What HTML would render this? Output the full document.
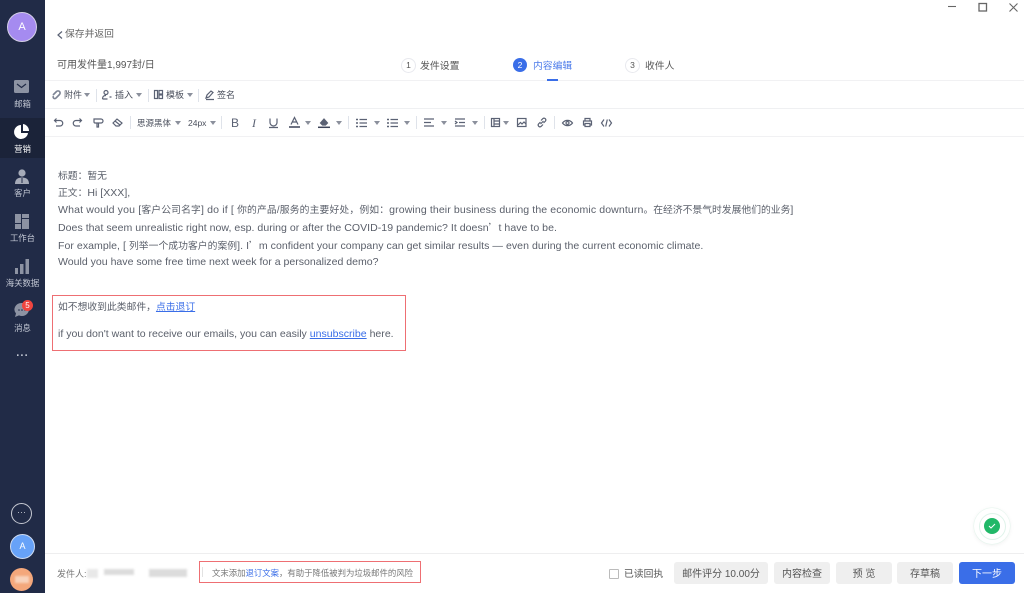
<!DOCTYPE html>
<html><head><meta charset="utf-8"><style>
html,body{margin:0;padding:0;background:#fff}
#p{position:relative;width:1024px;height:593px;overflow:hidden;background:#fff;font-family:"Liberation Sans","Noto Sans CJK SC",sans-serif;color:#4a4f5c;font-size:11px;filter:blur(.3px)}
.t{position:absolute;white-space:nowrap;line-height:14px}
.a{position:absolute}
.side{color:#c3c8d4;font-size:8.400px;width:45px;text-align:center;left:0}
.btn{position:absolute;top:562px;height:22px;line-height:25px;background:#efefef;border-radius:3px;text-align:center;font-size:10px;color:#555}
.tb{position:absolute;width:1px;height:13px;background:#dfe3ea}
svg.i{position:absolute;overflow:visible;fill:none;stroke:#5b6274;stroke-width:1.2}
.car{position:absolute;width:0;height:0;border-left:3px solid transparent;border-right:3px solid transparent;border-top:4px solid #8b909c}
.body{color:#5a5f6a;font-size:10.550px;left:58px}
.c{font-size:9.800px}
.q{font-size:9.800px;font-family:"Noto Sans CJK SC",sans-serif}
a{color:#3a6ee8;text-decoration:underline}
</style></head><body><div id="p">

<div class="a" style="left:0;top:0;width:45px;height:593px;background:#212b47"></div>
<div class="a" style="left:0;top:118px;width:45px;height:40px;background:#1b2339"></div>
<div class="a" style="left:7px;top:12px;width:28px;height:28px;border-radius:50%;background:#a58bf0;border:1px solid #d5d0e8;color:#fff;text-align:center;line-height:28px;font-size:11px">A</div>

<svg class="a" style="left:14px;top:80px" width="16" height="14"><rect width="15" height="13" rx="1.5" fill="#8d93a3"/><path d="M3 4l4.500 3.500L12 4" stroke="#212b47" stroke-width="1.2" fill="none"/></svg>
<div class="t side" style="top:97px">邮箱</div>
<svg class="a" style="left:14px;top:124px" width="16" height="16"><path d="M7 1a7 7 0 1 0 7 8H7z" fill="#fff"/><path d="M9 0a7 7 0 0 1 6 7H9z" fill="#fff"/></svg>
<div class="t side" style="top:142px;color:#fff">营销</div>
<svg class="a" style="left:14px;top:169px" width="16" height="16"><circle cx="8" cy="4" r="3.600" fill="#a6abb8"/><path d="M1 15c0-5 3-6.500 7-6.500s7 1.500 7 6.500z" fill="#a6abb8"/><path d="M8 9v5" stroke="#212b47"/></svg>
<div class="t side" style="top:186px">客户</div>
<svg class="a" style="left:15px;top:214px" width="14" height="15" fill="#8d93a3"><rect width="6" height="9"/><rect x="7" width="7" height="4"/><rect x="7" y="5" width="7" height="10"/><rect y="10" width="6" height="5"/></svg>
<div class="t side" style="top:231px">工作台</div>
<svg class="a" style="left:15px;top:259px" width="14" height="15" fill="#8d93a3"><rect y="9" width="3" height="6"/><rect x="5" y="5" width="3.500" height="10"/><rect x="10.500" width="3.500" height="15"/></svg>
<div class="t side" style="top:276px">海关数据</div>
<svg class="a" style="left:14px;top:302px" width="16" height="16"><path d="M8 1a7 6.500 0 1 1-3 12.400L1 15l1-3.500A7 6.500 0 0 1 8 1z" fill="#8d93a3"/><circle cx="5" cy="8" r=".8" fill="#212b47"/><circle cx="8" cy="8" r=".8" fill="#212b47"/><circle cx="11" cy="8" r=".8" fill="#212b47"/></svg>
<div class="a" style="left:22px;top:300px;width:11px;height:11px;border-radius:50%;background:#f0453f;color:#fff;font-size:8px;line-height:11px;text-align:center">5</div>
<div class="t side" style="top:321px">消息</div>
<div class="t side" style="top:349px;font-size:11px;font-weight:bold;letter-spacing:.5px">···</div>

<div class="a" style="left:11px;top:503px;width:19px;height:19px;border:1px solid #c6c9d2;border-radius:50%;color:#c6c9d2;text-align:center;line-height:17px;font-size:9px">···</div>
<div class="a" style="left:10px;top:534px;width:23px;height:23px;border-radius:50%;background:#67a2f8;border:.5px solid #cfdcf2;color:#fff;text-align:center;line-height:23px;font-size:9px">A</div>
<div class="a" style="left:10px;top:568px;width:23px;height:23px;border-radius:50%;background:#f4a77b"></div>
<div class="a" style="left:15px;top:576px;width:14px;height:7px;background:#f8d3bc;filter:blur(1px)"></div>

<svg class="a" style="left:946px;top:2px" width="74" height="11" stroke="#666" fill="none" stroke-width="1.100"><path d="M2 4.500h8"/><rect x="33" y="1.500" width="7.500" height="7.500" stroke-width="1.300"/><path d="M63.500 1.500l8 8M71.500 1.500l-8 8"/></svg>

<svg class="i" style="left:57px;top:31px" width="6" height="8"><path d="M5 .5L1 4l4 3.500"/></svg>
<div class="t" style="left:65px;top:28px;font-size:9.800px;color:#666">保存并返回</div>
<div class="t" style="left:57px;top:59px;font-size:10px;color:#555">可用发件量1,997封/日</div>

<div class="a" style="left:401px;top:58px;width:13px;height:13px;border:1px solid #e8e9ee;border-radius:50%;text-align:center;line-height:13px;font-size:8.500px;color:#555">1</div>
<div class="t" style="left:420px;top:60px;font-size:9.900px;color:#555">发件设置</div>
<div class="a" style="left:513px;top:58px;width:14px;height:14px;border-radius:50%;background:#3a6ee8;text-align:center;line-height:14px;font-size:8.500px;color:#fff">2</div>
<div class="t" style="left:533px;top:60px;font-size:9.800px;color:#4c7bea">内容编辑</div>
<div class="a" style="left:625px;top:58px;width:13px;height:13px;border:1px solid #e8e9ee;border-radius:50%;text-align:center;line-height:13px;font-size:8.500px;color:#555">3</div>
<div class="t" style="left:645px;top:60px;font-size:9.800px;color:#555">收件人</div>

<div class="a" style="left:45px;top:80px;width:979px;height:1px;background:#f1f1f3"></div>
<div class="a" style="left:547px;top:79px;width:11px;height:2px;background:#3a6ee8"></div>
<div class="a" style="left:45px;top:108px;width:979px;height:1px;background:#eff0f2"></div>
<div class="a" style="left:45px;top:136px;width:979px;height:1px;background:#f1f1f3"></div>
<div class="a" style="left:45px;top:553px;width:979px;height:1px;background:#eeeeef"></div>

<svg class="i" style="left:52px;top:90px" width="9" height="9"><path d="M1 5l3.500-3.500a2 2 0 0 1 3 3L4 8a1.500 1.500 0 0 1-2.500-2" stroke="#7d8494" stroke-width="1.600"/></svg>
<div class="t" style="left:64px;top:88px;font-size:9px">附件</div>
<div class="car" style="left:84px;top:93px"></div>
<div class="tb" style="left:96px;top:89px"></div>
<svg class="i" style="left:102px;top:90px" width="10" height="10"><circle cx="4" cy="2.500" r="2"/><path d="M.5 9c0-3 1.500-3.500 3.500-3.500M.5 9h5M7.500 7h2"/></svg>
<div class="t" style="left:115px;top:88px;font-size:9px">插入</div>
<div class="car" style="left:136px;top:93px"></div>
<div class="tb" style="left:148px;top:89px"></div>
<svg class="i" style="left:154px;top:90px" width="9" height="9"><rect x=".5" y=".5" width="3" height="8"/><rect x="5" y=".5" width="3.500" height="3.500"/><rect x="5" y="5" width="3.500" height="3.500"/></svg>
<div class="t" style="left:166px;top:88px;font-size:9px">模板</div>
<div class="car" style="left:187px;top:93px"></div>
<div class="tb" style="left:198px;top:89px"></div>
<svg class="i" style="left:205px;top:90px" width="10" height="10"><path d="M1 8l1-3 4-4 2 1.500-4 4.500zM1 9.500h8"/></svg>
<div class="t" style="left:217px;top:88px;font-size:9px">签名</div>

<svg class="i" style="left:54px;top:118px" width="9" height="9"><path d="M2.500 .5L.5 2.500l2 2M.5 2.500H6a2.500 2.500 0 0 1 0 5.500H2"/></svg>
<svg class="i" style="left:73px;top:118px" width="9" height="9"><path d="M6.500 .5l2 2-2 2M8.500 2.500H3a2.500 2.500 0 0 0 0 5.500h4"/></svg>
<svg class="i" style="left:93px;top:118px" width="10" height="10"><path d="M1 1h7a1 1 0 0 1 0 4H2a1 1 0 0 1-1-1zM4 5v4h1.500V5"/></svg>
<svg class="i" style="left:112px;top:118px" width="11" height="9"><path d="M1 5l4-4 5 4-3 3H4zM3 3l5 4"/></svg>
<div class="tb" style="left:130px;top:116px"></div>
<div class="t" style="left:137px;top:116px;font-size:8.500px">思源黑体</div>
<div class="car" style="left:175px;top:121px"></div>
<div class="t" style="left:188px;top:116px;font-size:8.500px">24px</div>
<div class="car" style="left:210px;top:121px"></div>
<div class="tb" style="left:221px;top:116px"></div>
<div class="t" style="left:231px;top:116px;font-size:12px;color:#5b6274">B</div>
<div class="t" style="left:252px;top:116px;font-size:12px;font-style:italic;color:#5b6274;font-family:'Liberation Serif',serif">I</div>
<svg class="i" style="left:269px;top:118px" width="9" height="10"><path d="M1 .5v4a3.300 3.300 0 0 0 7 0v-4M0 9.500h9"/></svg>
<svg class="i" style="left:289px;top:117px" width="11" height="11"><path d="M2 7.500L5.500 .5 9 7.500M3.200 5h4.600"/><path d="M0 10h11" stroke="#3c4358" stroke-width="1.500"/></svg>
<div class="car" style="left:305px;top:121px"></div>
<svg class="i" style="left:318px;top:117px" width="12" height="11"><path d="M2.500 6L6 2l3.500 4-2 2h-3z" fill="#5b6274"/><path d="M0 10.300h12" stroke="#3c4358" stroke-width="1.500"/></svg>
<div class="car" style="left:336px;top:121px"></div>
<div class="tb" style="left:348px;top:116px"></div>
<svg class="i" style="left:356px;top:118px" width="11" height="10"><path d="M3.500 1.500H11M3.500 5H11M3.500 8.500H11"/><path d="M0 1.500h2M0 5h2M0 8.500h2" stroke-width="1.500"/></svg>
<div class="car" style="left:374px;top:121px"></div>
<svg class="i" style="left:387px;top:118px" width="11" height="10"><path d="M3.500 1.500H11M3.500 5H11M3.500 8.500H11"/><path d="M0 1.500h2M0 5h2M0 8.500h2" stroke-width="1.500"/></svg>
<div class="car" style="left:404px;top:121px"></div>
<div class="tb" style="left:416px;top:116px"></div>
<svg class="i" style="left:424px;top:118px" width="10" height="9"><path d="M0 1h10M0 4.500h7M0 8h10"/></svg>
<div class="car" style="left:441px;top:121px"></div>
<svg class="i" style="left:455px;top:118px" width="10" height="9"><path d="M0 1h10M4 4.500h6M0 8h10M0 3l2 1.500L0 6"/></svg>
<div class="car" style="left:472px;top:121px"></div>
<div class="tb" style="left:484px;top:116px"></div>
<svg class="i" style="left:491px;top:118px" width="9" height="9"><rect x=".5" y=".5" width="8" height="8"/><path d="M3 .5v8M3 3h5.500M3 6h5.500"/></svg>
<div class="car" style="left:503px;top:121px"></div>
<svg class="i" style="left:517px;top:118px" width="10" height="9"><rect x=".5" y=".5" width="8.500" height="8"/><path d="M1 7l2.500-2.500L5 6l2-2 2 2"/></svg>
<svg class="i" style="left:537px;top:117px" width="10" height="11"><path d="M4 3.500l2-2a1.800 1.800 0 0 1 2.500 2.500l-2 2M6 7.500l-2 2A1.800 1.800 0 0 1 1.500 7l2-2M3.500 7L6.500 4"/></svg>
<div class="tb" style="left:554px;top:116px"></div>
<svg class="i" style="left:562px;top:119px" width="11" height="8"><path d="M.5 4C3 .500 8 .500 10.500 4 8 7.500 3 7.500.5 4z"/><circle cx="5.500" cy="4" r="1.500"/></svg>
<svg class="i" style="left:583px;top:118px" width="9" height="9"><path d="M2 3V.5h5V3M2 7H.5V3h8v4H7M2 5.500h5v3H2z"/></svg>
<svg class="i" style="left:601px;top:119px" width="11" height="8"><path d="M3 .5L.5 4 3 7.500M8 .5L10.500 4 8 7.500M6.300 .5L4.700 7.500"/></svg>

<div class="t body" style="top:169px"><span class="c">标题：暂无</span></div>
<div class="t body" style="top:186px"><span class="c">正文：</span>Hi [XXX],</div>
<div class="t body" style="top:203px;letter-spacing:.15px">What would you [<span class="c">客户公司名字</span>] do if [ <span class="c">你的产品/服务的主要好处，例如：</span><span style="letter-spacing:.1px">growing their business during the economic downturn</span><span class="c" style="letter-spacing:0">。在经济不景气时发展他们的业务</span>]</div>
<div class="t body" style="top:220px;letter-spacing:.03px">Does that seem unrealistic right now, esp. during or after the COVID-19 pandemic? It doesn<span class="q">’</span>t have to be.</div>
<div class="t body" style="top:238px;letter-spacing:.04px">For example, [ <span class="c">列举一个成功客户的案例</span>]. I<span class="q">’</span>m confident your company can get similar results — even during the current economic climate.</div>
<div class="t body" style="top:255px">Would you have some free time next week for a personalized demo?</div>

<div class="a" style="left:52px;top:295px;width:352px;height:54px;border:1px solid #ee6f73"></div>
<div class="t body" style="top:300px"><span class="c">如不想收到此类邮件，<a>点击退订</a></span></div>
<div class="t body" style="top:327px">if you don't want to receive our emails, you can easily <a>unsubscribe</a> here.</div>

<div class="t" style="left:57px;top:567px;font-size:9px;color:#777">发件人:</div>
<div class="a" style="left:87px;top:569px;width:11px;height:9px;background:#e8e8e8;filter:blur(1px)"></div>
<div class="a" style="left:104px;top:569px;width:30px;height:6px;background:#dcdcdc;filter:blur(1px)"></div>
<div class="a" style="left:149px;top:569px;width:38px;height:8px;background:#dcdcdc;filter:blur(1px)"></div>
<div class="a" style="left:199px;top:561px;width:220px;height:20px;border:1px solid #ee6f73"></div>
<div class="a" style="left:202px;top:567px;width:1px;height:10px;background:#e2e2e2"></div>
<div class="t" style="left:212px;top:566px;font-size:8.400px;color:#777">文末添加<span style="color:#3a6ee8">退订文案</span>，有助于降低被判为垃圾邮件的风险</div>

<div class="a" style="left:609px;top:569px;width:8px;height:8px;border:1px solid #bbb;border-radius:1px"></div>
<div class="t" style="left:624px;top:568px;font-size:9.800px;color:#555">已读回执</div>
<div class="btn" style="left:674px;width:94px">邮件评分 10.00分</div>
<div class="btn" style="left:774px;width:56px">内容检查</div>
<div class="btn" style="left:836px;width:56px">预 览</div>
<div class="btn" style="left:897px;width:56px">存草稿</div>
<div class="btn" style="left:959px;width:56px;background:#3a6ee8;color:#fff">下一步</div>

<div class="a" style="left:974px;top:508px;width:36px;height:36px;border-radius:50%;box-shadow:0 0 0 .5px #e3f5ec,0 1px 5px rgba(0,0,0,.07);background:#fff"></div>
<div class="a" style="left:979px;top:513px;width:25px;height:25px;border-radius:50%;border:.5px solid #dff3ea"></div>
<div class="a" style="left:984px;top:518px;width:16px;height:16px;border-radius:50%;background:#21b868"></div>
<svg class="a" style="left:988px;top:523px" width="8" height="6"><path d="M1 3l2 2 4-4" stroke="#fff" fill="none"/></svg>
</div></body></html>
